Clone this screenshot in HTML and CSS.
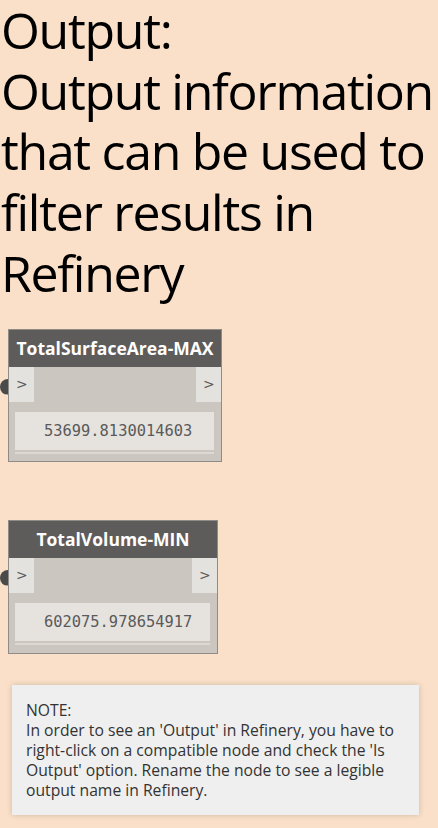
FILE: index.html
```html
<!DOCTYPE html>
<html>
<head>
<meta charset="utf-8">
<link rel="stylesheet" href="styles.css">
</head>
<body>
<div class="page">
  <h1 class="title">Output:<br>Output information that can be used to filter results in Refinery</h1>

  <div class="node node-a">
    <span class="plug"></span>
    <div class="node-head">TotalSurfaceArea-MAX</div>
    <div class="ports">
      <span class="port">&gt;</span>
      <span class="port">&gt;</span>
    </div>
    <div class="value">53699.8130014603</div>
  </div>

  <div class="node node-b">
    <span class="plug"></span>
    <div class="node-head">TotalVolume-MIN</div>
    <div class="ports">
      <span class="port">&gt;</span>
      <span class="port">&gt;</span>
    </div>
    <div class="value">602075.978654917</div>
  </div>

  <div class="note">NOTE:<br>In order to see an 'Output' in Refinery, you have to right-click on a compatible node and check the 'Is Output' option. Rename the node to see a legible output name in Refinery.</div>
</div>
</body>
</html>
```

FILE: styles.css
```css
html, body {
  margin: 0;
  padding: 0;
  background: #fae0c8;
}
.page {
  width: 438px;
  height: 828px;
  overflow: hidden;
  display: flex;
  flex-direction: column;
  align-items: flex-start;
}
.title {
  margin: 0;
  padding: 0 0 0 1px;
  font-family: "Open Sans", "Liberation Sans", sans-serif;
  font-weight: 400;
  font-size: 50px;
  line-height: 60.7px;
  letter-spacing: -1.3px;
  color: #000;
  width: 437px;
}
.node {
  position: relative;
  margin-left: 8px;
  border: 1px solid #8f8c87;
  background: #cbc7c0;
  display: flex;
  flex-direction: column;
  box-sizing: border-box;
}
.node-a { width: 214px; margin-top: 25px; height: 133px; }
.node-b { width: 210px; margin-top: 58px; height: 134px; }
.node-head {
  background: #5e5c5a;
  color: #fff;
  font-family: "Open Sans", "Liberation Sans", sans-serif;
  font-weight: 700;
  font-size: 17.5px;
  height: 37px;
  line-height: 37px;
  text-align: center;
  white-space: nowrap;
}
.ports {
  display: flex;
  justify-content: space-between;
  height: 35px;
}
.port {
  width: 25px;
  background: #e4e2de;
  color: #5a5a5a;
  font-family: "DejaVu Sans", sans-serif;
  font-size: 14px;
  line-height: 35px;
  padding-left: 7px;
  box-sizing: border-box;
}
.value {
  margin: 10px 7px 0 6px;
  background: #e6e3df;
  height: 38px;
  line-height: 38px;
  font-family: "DejaVu Sans Mono", "Liberation Mono", monospace;
  font-size: 15.4px;
  color: #5a5a5a;
  padding-left: 29px;
  box-shadow: 0 2px 0 #cbc7c0, 0 4px 0 #dcd9d4;
}
.plug {
  position: absolute;
  left: -9px;
  top: 49px;
  width: 16px;
  height: 16px;
  border-radius: 50%;
  background: #4a4a4a;
  clip-path: inset(0 8px 0 0);
}
.note {
  margin: 31px 0 0 12px;
  width: 407px;
  height: 130px;
  box-sizing: border-box;
  background: #efefef;
  box-shadow: 0 0 6px rgba(0,0,0,0.18);
  padding: 15px 10px 0 14px;
  font-family: "Open Sans", "Liberation Sans", sans-serif;
  font-size: 15.7px;
  line-height: 20px;
  color: #333;
}
```
